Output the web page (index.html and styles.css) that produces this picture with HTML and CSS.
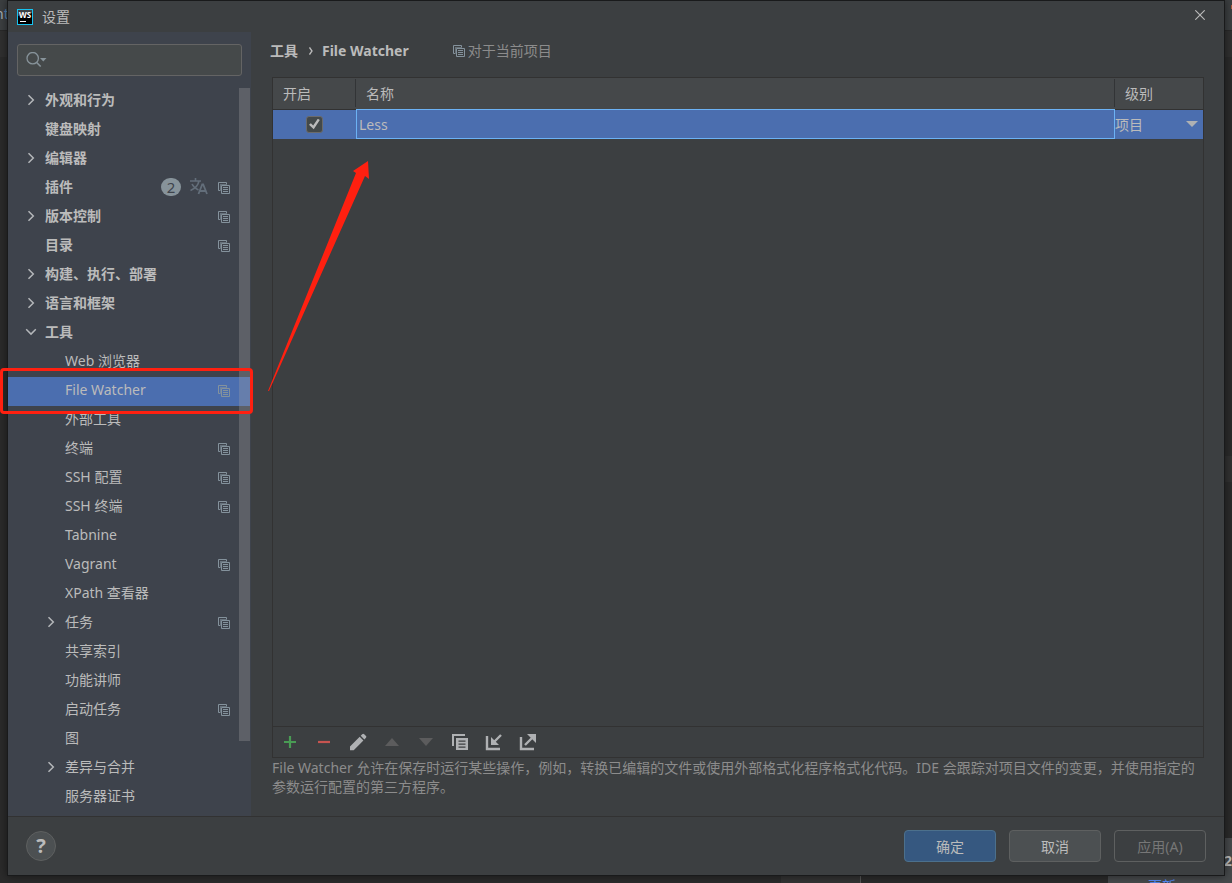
FILE: index.html
```html
<!DOCTYPE html>
<html lang="zh-CN">
<head>
<meta charset="utf-8">
<title>设置</title>
<link rel="stylesheet" href="styles.css">
</head>
<body>
<svg class="defs" width="0" height="0" aria-hidden="true">
  <symbol id="project" viewBox="0 0 12 12"><path d="M.5 8.500V.5h8v2M.5 8.500h2" fill="none" stroke="currentColor"/><path d="M2 2h6.500v1H3v5H2z" fill="currentColor" opacity=".6"/><path d="M3.500 3.500h8v8h-8zM5 5.500h5M5 7.500h5M5 9.500h5" fill="none" stroke="currentColor"/></symbol>
  <symbol id="right" viewBox="0 0 12 12"><path d="M3.500 1.200 8.300 6l-4.800 4.800" fill="none" stroke="currentColor" stroke-width="1.500"/></symbol>
  <symbol id="down" viewBox="0 0 12 12"><path d="M1.200 3.300 6 8.100l4.800-4.800" fill="none" stroke="currentColor" stroke-width="1.500"/></symbol>
</svg>
<div class="desktop">
  <div class="ide" aria-hidden="true">
    <div class="ide-top"><span>n<b>t</b></span><i></i></div>
    <div class="ide-tabs"></div>
    <div class="ide-mark"></div>
    <div class="ide-status"></div>
    <div class="ide-panel"><span class="ide-count">2</span><span class="ide-update">更新</span></div>
  </div>
  <main class="dialog">
    <header class="titlebar">
      <svg class="logo" viewBox="0 0 16 16" aria-hidden="true"><rect x=".5" y=".5" width="15" height="15" fill="#000" stroke="#17c3f0"/><path d="M1 1h14v3L1 7z" fill="#3c4043"/><text x="2" y="8.500" class="logo-text">WS</text><path d="M3 12h6v1H3z" fill="#fff"/></svg>
      <h1>设置</h1>
      <button class="close" type="button" aria-label="关闭"><svg viewBox="0 0 10 10"><path d="m.3.300 9.400 9.400M9.700.300.300 9.700" fill="none" stroke="currentColor" stroke-width="1.100"/></svg></button>
    </header>
    <div class="content">
      <aside class="sidebar">
        <label class="search"><svg viewBox="0 0 22 16" aria-hidden="true"><circle cx="6.700" cy="6.200" r="5.700" fill="none" stroke="currentColor" stroke-width="1.300"/><path d="m10.700 10.500 4 4" stroke="currentColor" stroke-width="1.600"/><path d="M14 6h6.500l-3.200 3.500z" fill="currentColor"/></svg><input type="text" aria-label="搜索设置"></label>
        <div class="tree-wrap">
          <nav class="tree" aria-label="设置类别">
            <a href="#" class="node top"><svg class="arrow"><use href="#right"/></svg><span>外观和行为</span></a>
            <a href="#" class="node top leaf"><span>键盘映射</span></a>
            <a href="#" class="node top"><svg class="arrow"><use href="#right"/></svg><span>编辑器</span></a>
            <a href="#" class="node top leaf"><span>插件</span><em class="count">2</em><svg class="translate" viewBox="0 0 18 17"><path d="M0 3h11M5.500 0v3M2 6c1.500 3 4 5 6.500 6M9 3C8 8 4 11 .5 12.500" fill="none" stroke="currentColor" stroke-width="1.600"/><path d="m8.500 16 3.700-9.500h1L17 16m-7-3h5.500" fill="none" stroke="currentColor" stroke-width="1.800"/></svg><svg class="project"><use href="#project"/></svg></a>
            <a href="#" class="node top"><svg class="arrow"><use href="#right"/></svg><span>版本控制</span><svg class="project"><use href="#project"/></svg></a>
            <a href="#" class="node top leaf"><span>目录</span><svg class="project"><use href="#project"/></svg></a>
            <a href="#" class="node top"><svg class="arrow"><use href="#right"/></svg><span>构建、执行、部署</span></a>
            <a href="#" class="node top"><svg class="arrow"><use href="#right"/></svg><span>语言和框架</span></a>
            <a href="#" class="node top"><svg class="arrow"><use href="#down"/></svg><span>工具</span></a>
            <a href="#" class="node sub leaf"><span>Web 浏览器</span></a>
            <a href="#" class="node sub leaf selected" aria-current="page"><span>File Watcher</span><svg class="project"><use href="#project"/></svg></a>
            <a href="#" class="node sub leaf"><span>外部工具</span></a>
            <a href="#" class="node sub leaf"><span>终端</span><svg class="project"><use href="#project"/></svg></a>
            <a href="#" class="node sub leaf"><span>SSH 配置</span><svg class="project"><use href="#project"/></svg></a>
            <a href="#" class="node sub leaf"><span>SSH 终端</span><svg class="project"><use href="#project"/></svg></a>
            <a href="#" class="node sub leaf"><span>Tabnine</span></a>
            <a href="#" class="node sub leaf"><span>Vagrant</span><svg class="project"><use href="#project"/></svg></a>
            <a href="#" class="node sub leaf"><span>XPath 查看器</span></a>
            <a href="#" class="node sub"><svg class="arrow"><use href="#right"/></svg><span>任务</span><svg class="project"><use href="#project"/></svg></a>
            <a href="#" class="node sub leaf"><span>共享索引</span></a>
            <a href="#" class="node sub leaf"><span>功能讲师</span></a>
            <a href="#" class="node sub leaf"><span>启动任务</span><svg class="project"><use href="#project"/></svg></a>
            <a href="#" class="node sub leaf"><span>图</span></a>
            <a href="#" class="node sub"><svg class="arrow"><use href="#right"/></svg><span>差异与合并</span></a>
            <a href="#" class="node sub leaf"><span>服务器证书</span></a>
          </nav>
          <div class="scroll-thumb"></div>
        </div>
      </aside>
      <section class="page">
        <div class="crumbs"><b>工具</b><svg class="crumb-arrow" viewBox="0 0 4 8"><path d="m.5.500 2.500 3.500L.5 7.500" fill="none" stroke="currentColor" stroke-width="1.300"/></svg><b>File Watcher</b><span class="scope"><svg class="project"><use href="#project"/></svg>对于当前项目</span></div>
        <div class="watchers">
          <div class="table-area">
            <table>
              <thead><tr><th class="col-on"><span>开启</span></th><th><span>名称</span></th><th class="col-level"><span>级别</span></th></tr></thead>
              <tbody><tr>
                <td class="on"><input type="checkbox" checked aria-label="开启 Less"></td>
                <td class="name">Less</td>
                <td class="level"><div><select aria-label="级别"><option>项目</option></select></div></td>
              </tr></tbody>
            </table>
          </div>
          <div class="toolbar">
            <button type="button" aria-label="添加"><svg viewBox="0 0 18 18"><path d="M9 3v12M3 9h12" stroke="#499c54" stroke-width="2.200"/></svg></button>
            <button type="button" aria-label="删除"><svg viewBox="0 0 18 18"><path d="M3 9h12" stroke="#c75450" stroke-width="2.200"/></svg></button>
            <button type="button" aria-label="编辑"><svg viewBox="0 0 18 18"><path d="M1 13.500 10.700 3.800l3.700 3.700-9.700 9.700H1zM11.700 2.800l1.500-1.500q1-1 2 0L17 3.100q.8.800 0 1.700l-1.600 1.600z" fill="#afb1b3"/></svg></button>
            <button type="button" aria-label="上移" disabled><svg viewBox="0 0 18 18"><path d="M2 13 9 5l7 8z" fill="#5c5c5d"/></svg></button>
            <button type="button" aria-label="下移" disabled><svg viewBox="0 0 18 18"><path d="m2 5 7 8 7-8z" fill="#5c5c5d"/></svg></button>
            <button type="button" aria-label="复制"><svg viewBox="0 0 18 18"><path d="M2 13V2h12" fill="none" stroke="#afb1b3" stroke-width="2"/><path fill-rule="evenodd" d="M5 5h12v12H5zM7.500 7.500v1.300h7V7.500zm0 3v1.300h7v-1.300zm0 3v1.300h7v-1.300z" fill="#afb1b3"/></svg></button>
            <button type="button" aria-label="导入"><svg viewBox="0 0 18 18"><path d="M2 3v13h13M16 2l-7 7" fill="none" stroke="#afb1b3" stroke-width="2.400"/><path d="M6 4v8h8z" fill="#afb1b3"/></svg></button>
            <button type="button" aria-label="导出"><svg viewBox="0 0 18 18"><path d="M2 4v12h13M6 12l7-7" fill="none" stroke="#afb1b3" stroke-width="2.400"/><path d="M8 1h9v9z" fill="#afb1b3"/></svg></button>
          </div>
        </div>
        <p class="hint">File Watcher 允许在保存时运行某些操作，例如，转换已编辑的文件或使用外部格式化程序格式化代码。IDE 会跟踪对项目文件的变更，并使用指定的参数运行配置的第三方程序。</p>
      </section>
    </div>
    <footer class="footer">
      <button type="button" class="help" aria-label="帮助">?</button>
      <button type="button" class="btn primary">确定</button>
      <button type="button" class="btn">取消</button>
      <button type="button" class="btn" disabled>应用(A)</button>
    </footer>
  </main>
  <div class="highlight"></div>
  <svg class="pointer" viewBox="0 0 102 231" aria-hidden="true"><path d="M0 230 88 12l-3-2 15-10 1 18-4-3L1 230z" fill="#ff2010"/></svg>
</div>
</body>
</html>
```
FILE: styles.css
```css
* { box-sizing: border-box; }
body {
  margin: 0;
  background: #2b2b2b;
  color: #bbbbbb;
  font: 14px/20px "Noto Sans", "Noto Sans CJK SC", sans-serif;
}
button, input, select { font: inherit; color: inherit; }
svg { display: block; flex: none; }
.defs { position: absolute; }
.desktop {
  position: relative;
  display: flex;
  min-height: 100vh;
  padding: 0 7px 7px;
  overflow: hidden;
}

/* editor window behind the dialog */
.ide { position: absolute; inset: 0; }
.ide-top { height: 30px; background: #3c3f41; line-height: 28px; }
.ide-top span { position: absolute; left: -5px; color: #a9b0b5; }
.ide-top b { color: #5083b5; font-weight: 400; }
.ide-top i { position: absolute; right: 0; top: 5px; width: 1px; height: 4px; background: #a55a40; }
.ide-tabs { height: 27px; background: #303030; border-top: 1px solid #292929; }
.ide-mark { position: absolute; top: 456px; right: 0; width: 8px; height: 26px; background: #313131; }
.ide-status { position: absolute; left: 781px; bottom: 0; width: 80px; height: 7px; background: #333333; border-right: 1px solid #555555; }
.ide-panel { position: absolute; right: 0; bottom: 0; width: 124px; height: 45px; background: #46494b; overflow: hidden; }
.ide-count { position: absolute; right: 0; top: 13px; font-weight: 700; }
.ide-update { position: absolute; left: 40px; top: 38px; color: #548af7; }

.dialog {
  position: relative;
  flex: 1;
  min-width: 0;
  display: flex;
  flex-direction: column;
  border: 1px solid #191a1b;
  background: #3c3f41;
  box-shadow: 0 0 8px rgba(0, 0, 0, .5);
}
.titlebar { display: flex; align-items: center; height: 31px; padding: 0 19px 0 9px; }
.logo { width: 16px; height: 16px; }
.logo-text { font: 700 8px "Open Sans", sans-serif; fill: #fff; }
.titlebar h1 { margin: 0 auto 0 9px; font-size: 14px; font-weight: 400; }
.close { width: 10px; height: 10px; padding: 0; border: 0; background: none; margin-bottom: 4px; }
.content { flex: 1; display: flex; min-height: 0; }

.sidebar { flex: none; width: 243px; padding-bottom: 4px; background: #3e434c; }
.search {
  display: flex;
  align-items: center;
  height: 32px;
  margin: 12px 9px 11px;
  padding: 0 8px;
  border: 1px solid #646464;
  border-radius: 3px;
  background: #45494a;
  color: #87939a;
}
.search svg { width: 22px; height: 16px; }
.search input { flex: 1; min-width: 0; border: 0; outline: 0; background: none; }
.tree-wrap { position: relative; }
.node {
  display: flex;
  align-items: center;
  height: 29px;
  padding: 0 21px 4px 17px;
  color: inherit;
  text-decoration: none;
}
.top { font-weight: 700; }
.top.leaf { padding-left: 37px; }
.sub { padding-left: 37px; }
.sub.leaf { padding-left: 57px; }
.node span { margin-right: auto; }
.selected { background: #4b6eaf; }
.arrow { width: 12px; height: 12px; margin-right: 8px; color: #b4b7ba; }
.project { width: 12px; height: 12px; color: #84929c; }
.node .project { margin-top: 2px; }
.count {
  width: 20px;
  height: 18px;
  margin-right: 9px;
  border-radius: 9px;
  background: #87939a;
  color: #3e434c;
  font-style: normal;
  font-weight: 400;
  font-size: 15px;
  line-height: 18px;
  text-align: center;
}
.translate { width: 18px; height: 17px; margin-right: 10px; color: #636e7a; }
.scroll-thumb { position: absolute; top: 1px; right: 1px; width: 11px; height: 90%; background: rgba(166, 166, 166, .3); }

.page { flex: 1; min-width: 0; display: flex; flex-direction: column; padding: 9px 20px 20px 21px; }
.crumbs { display: flex; align-items: center; height: 20px; margin-bottom: 16px; padding-right: 2px; }
.crumb-arrow { width: 4px; height: 8px; margin: 0 9px 0 11px; }
.crumbs b:first-child { margin-left: -2px; }
.scope { display: flex; align-items: center; gap: 3px; margin-left: 44px; color: #8c8c8c; }
.watchers { flex: 1; display: flex; flex-direction: column; border: 1px solid #323232; }
.table-area { flex: 1; }
table { width: 100%; border-collapse: collapse; table-layout: fixed; }
th { height: 31px; padding: 1px 0; background: #45484a; border-bottom: 1px solid #323232; font-weight: 400; text-align: left; }
th span { display: block; padding: 5px 10px 3px; border-right: 1px solid #323436; }
th:last-child span { border-right: 0; }
.col-on { width: 83px; }
.col-level { width: 88px; }
td { height: 30px; padding: 0; background: #4b6eaf; }
.on { text-align: center; }
.on input {
  appearance: none;
  position: relative;
  display: block;
  width: 17px;
  height: 17px;
  margin: 0 auto;
  border: 1px solid #6b6b6b;
  border-radius: 3px;
  background: #43494a;
}
.on input:checked::after {
  content: "";
  position: absolute;
  inset: 2px;
  background: #bbbbbb;
  clip-path: polygon(0 55%, 17% 42%, 38% 62%, 80% 0, 98% 12%, 43% 95%);
}
.name { padding: 1px 0 0 3px; outline: 1px solid #6cb2f5; outline-offset: -1px; }
.level div { position: relative; }
.level select { display: block; width: 100%; height: 28px; border: 0; padding: 1px 0 0; appearance: none; background: none; }
.level div::after { content: ""; position: absolute; right: 5px; top: 11px; border: solid transparent; border-width: 6px 6px 0; border-top-color: #afb1b3; pointer-events: none; }
.toolbar { display: flex; align-items: center; gap: 16px; height: 31px; padding-left: 8px; border-top: 1px solid #323232; }
.toolbar button { width: 18px; height: 18px; padding: 0; border: 0; background: none; }
.toolbar svg { width: 18px; height: 18px; }
.hint { margin: 0; color: #8c8c8c; line-height: 19px; }

.footer { display: flex; align-items: center; gap: 13px; height: 59px; padding: 0 18px; border-top: 1px solid #323232; }
.help { width: 30px; height: 30px; margin-right: auto; padding: 0; border: 1px solid #5e6060; border-radius: 50%; background: #4c5052; font-size: 20px; font-weight: 700; line-height: 26px; }
.btn { width: 92px; height: 32px; padding: 1px 0 0; border: 1px solid #5e6060; border-radius: 4px; background: #4c5052; }
.primary { border-color: #4c708c; background: #365880; }
.btn:disabled { background: none; color: #777777; }

/* red annotations drawn over the window */
.highlight { position: absolute; left: 0; top: 368px; width: 253px; height: 46px; border: 3px solid #ff2010; border-radius: 4px; }
.pointer { position: absolute; left: 268px; top: 161px; width: 102px; height: 231px; }
```
